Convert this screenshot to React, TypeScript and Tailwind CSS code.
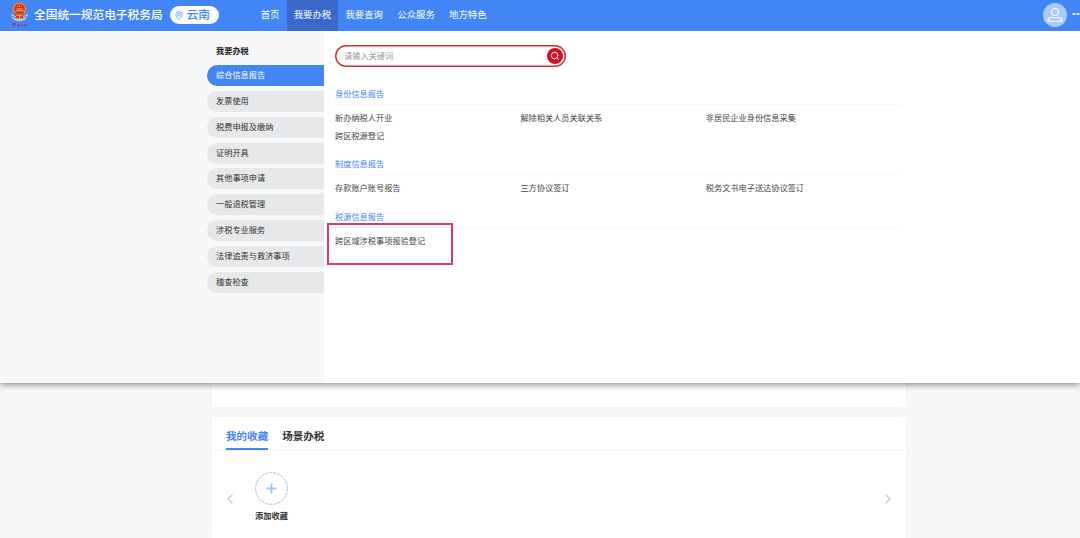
import { ChevronLeft, ChevronRight, Search } from "lucide-react"

const navItems = ["首页", "我要办税", "我要查询", "公众服务", "地方特色"]

const sideItems = [
  "综合信息报告",
  "发票使用",
  "税费申报及缴纳",
  "证明开具",
  "其他事项申请",
  "一般退税管理",
  "涉税专业服务",
  "法律追责与救济事项",
  "稽查检查",
]

const groups = [
  {
    title: "身份信息报告",
    items: ["新办纳税人开业", "解除相关人员关联关系", "非居民企业身份信息采集", "跨区税源登记"],
  },
  {
    title: "制度信息报告",
    items: ["存款账户账号报告", "三方协议签订", "税务文书电子送达协议签订"],
  },
  {
    title: "税源信息报告",
    items: ["跨区域涉税事项报验登记"],
    highlighted: true,
  },
]

function Emblem() {
  return (
    <svg className="mb-[3px] ml-[10px] h-[27px] w-[19px] shrink-0" viewBox="0 0 19 27">
      <path d="M1 12.500c.3 5.500 4 7.700 8.500 7.700s8.200-2.200 8.500-7.700l-4 2.500H5z" fill="#c3c9d6" />
      <path d="M2 15.500l5 1.500M17 15.500l-5 1.500" stroke="#6b7488" strokeWidth="1" />
      <circle cx="9.500" cy="8" r="6" fill="#dc2f22" stroke="#e58a34" strokeWidth="1.500" />
      <path d="M5.500 9.700h8M6.500 8h6M9.500 4v2M7 5.500h.8M11.200 5.500h.8" stroke="#f8b53b" strokeWidth="1.100" />
      <path d="M5 12.500h9l-1.500 5h-6z" fill="#d13a2c" />
      <path d="M6 14.200h7M9.500 13v5" stroke="#f2b13a" strokeWidth="1" />
      <path
        d="M2 23h4M4 22v4M7.500 24l2-.8M8 25.300l2-.6M11 24l2 .8M14 23.500l3 .8M14.500 25.300l2-.6"
        stroke="#b42b55"
        strokeWidth="1.100"
        fill="none"
      />
    </svg>
  )
}

function Header() {
  return (
    <header className="relative z-20 flex h-[31px] items-center bg-[#4285f4] text-white">
      <Emblem />
      <span className="ml-[5px] w-[129px] pb-[4px] text-[11.700px] leading-[27px] font-medium whitespace-nowrap">
        全国统一规范电子税务局
      </span>
      <div className="mb-[1px] ml-[7px] flex h-[18px] w-[49px] items-center rounded-full bg-white pl-[5px] text-[#4285f4]">
        <svg className="h-[9px] w-[8px]" viewBox="0 0 8 9" fill="none" stroke="currentColor" strokeWidth=".7">
          <path d="M4 8.500C2 6.800.8 5.200.8 3.700a3.200 3.200 0 0 1 6.400 0C7.200 5.200 6 6.800 4 8.500z" />
          <circle cx="4" cy="3.700" r="1.400" />
        </svg>
        <span className="ml-[3.500px] pb-[2px] text-[11.700px] leading-4 font-medium whitespace-nowrap">云南</span>
      </div>
      <nav className="ml-[34.500px] flex h-full">
        {navItems.map((item, index) => (
          <span
            key={item}
            className={`px-[7.150px] text-[9.400px] leading-[28px] whitespace-nowrap ${index === 1 ? "bg-[#3869cb]" : ""}`}
          >
            {item}
          </span>
        ))}
      </nav>
      <div className="mb-[1px] ml-auto flex items-center">
        <div className="flex size-6 items-center justify-center rounded-full bg-[#a9cbf8]">
          <svg className="size-4" viewBox="0 0 16 16" fill="none" stroke="white" strokeWidth="1.100">
            <circle cx="8" cy="5" r="3.500" />
            <path d="M1.300 14.300v-1.300c0-1.600 1.200-2.500 2.700-2.500h8c1.500 0 2.700.9 2.700 2.500v1.300z" />
          </svg>
        </div>
        <svg className="mb-[3px] ml-[5px] h-1 w-2" viewBox="0 0 8 4" fill="#dce9fe">
          <rect x=".5" y="1" width="3" height="2" />
          <rect x="4.500" y="1" width="3" height="2" />
        </svg>
      </div>
    </header>
  )
}

function Sidebar() {
  return (
    <aside className="w-[324px] bg-[#f6f8fa] pl-[207px] text-[8.200px] text-[#333]">
      <div className="h-[34px] pt-[9px] pl-[9px] leading-5 font-bold text-[#222]">我要办税</div>
      <div className="flex flex-col gap-[4.850px]">
        {sideItems.map((item, index) => (
          <div
            key={item}
            className={`h-[21px] rounded-l-full pl-[9px] leading-[19.500px] ${index === 0 ? "bg-[#4285f4] text-white" : "bg-[#e6e8e9]"}`}
          >
            {item}
          </div>
        ))}
      </div>
    </aside>
  )
}

function MenuPanel() {
  return (
    <section className="relative flex h-[352px] bg-white shadow-[0_1px_7px_rgba(0,0,0,0.55)]">
      <Sidebar />
      <div className="pt-[14px] pl-[11px]">
        <div className="flex h-[21.500px] w-[231px] items-center justify-between rounded-full bg-white pr-[3px] pl-[9px] ring-[1.500px] ring-[#c9303f] ring-inset">
          <span className="pb-[2px] text-[8.200px] leading-4 text-[#999]">请输入关键词</span>
          <span className="flex size-4 items-center justify-center rounded-full bg-[#c7142a]">
            <Search className="size-[10px] text-white" strokeWidth={2} />
          </span>
        </div>
        <div className="mt-[16.500px] w-[566px] text-[8.200px] text-[#444]">
          {groups.map((group) => (
            <div key={group.title} className="mb-[9px]">
              <div className="h-[22px] border-b border-[#f6f6f6] leading-[21px] text-[#4285f4]">{group.title}</div>
              <div className="grid grid-cols-[185.400px_185.400px_185.400px] pt-1">
                {group.items.map((item) => (
                  <div key={item} className="relative h-[17.700px] leading-[17.200px]">
                    {item}
                    {group.highlighted && (
                      <div className="absolute -top-[9.500px] -left-[8px] h-[42.500px] w-[126px] border-2 border-[#d93c62]" />
                    )}
                  </div>
                ))}
              </div>
            </div>
          ))}
        </div>
      </div>
    </section>
  )
}

function Favorites() {
  return (
    <section className="mt-[10px] h-[121px] bg-white shadow-[0_0_6px_rgba(0,0,0,0.03)]">
      <div className="flex h-[34px] gap-[14px] border-b border-[#f3f4f5] pl-[14px] text-[10.550px] leading-[38px] font-bold text-[#333]">
        <span className="h-[33px] border-b-2 border-[#4285f4] text-[#4285f4]">我的收藏</span>
        <span>场景办税</span>
      </div>
      <div className="flex px-[10px] pt-[21px]">
        <ChevronLeft className="mt-[19px] size-4 text-[#ccc]" strokeWidth={2} />
        <div className="ml-[17px] flex flex-col items-center">
          <svg className="size-[33px]" viewBox="0 0 33 33" fill="none">
            <circle cx="16.500" cy="16.500" r="15.900" stroke="#9dbcf2" strokeWidth="1" strokeDasharray="3 1" />
            <path d="M11.500 16.500h10M16.500 11.500v10" stroke="#a4c2f5" strokeWidth="1.800" />
          </svg>
          <span className="mt-[3px] text-[8.200px] leading-[15px] font-bold text-[#333]">添加收藏</span>
        </div>
        <ChevronRight className="mt-[19px] ml-auto size-4 text-[#ccc]" strokeWidth={2} />
      </div>
    </section>
  )
}

export default function App() {
  return (
    <div className="h-[538px] overflow-hidden bg-[#f6f8fa] font-['Noto_Sans_CJK_SC',sans-serif]">
      <Header />
      <div className="relative z-10">
        <MenuPanel />
      </div>
      <main className="ml-[212px] w-[694px]">
        <div className="h-6 bg-white shadow-[0_0_6px_rgba(0,0,0,0.03)]" />
        <Favorites />
      </main>
    </div>
  )
}
